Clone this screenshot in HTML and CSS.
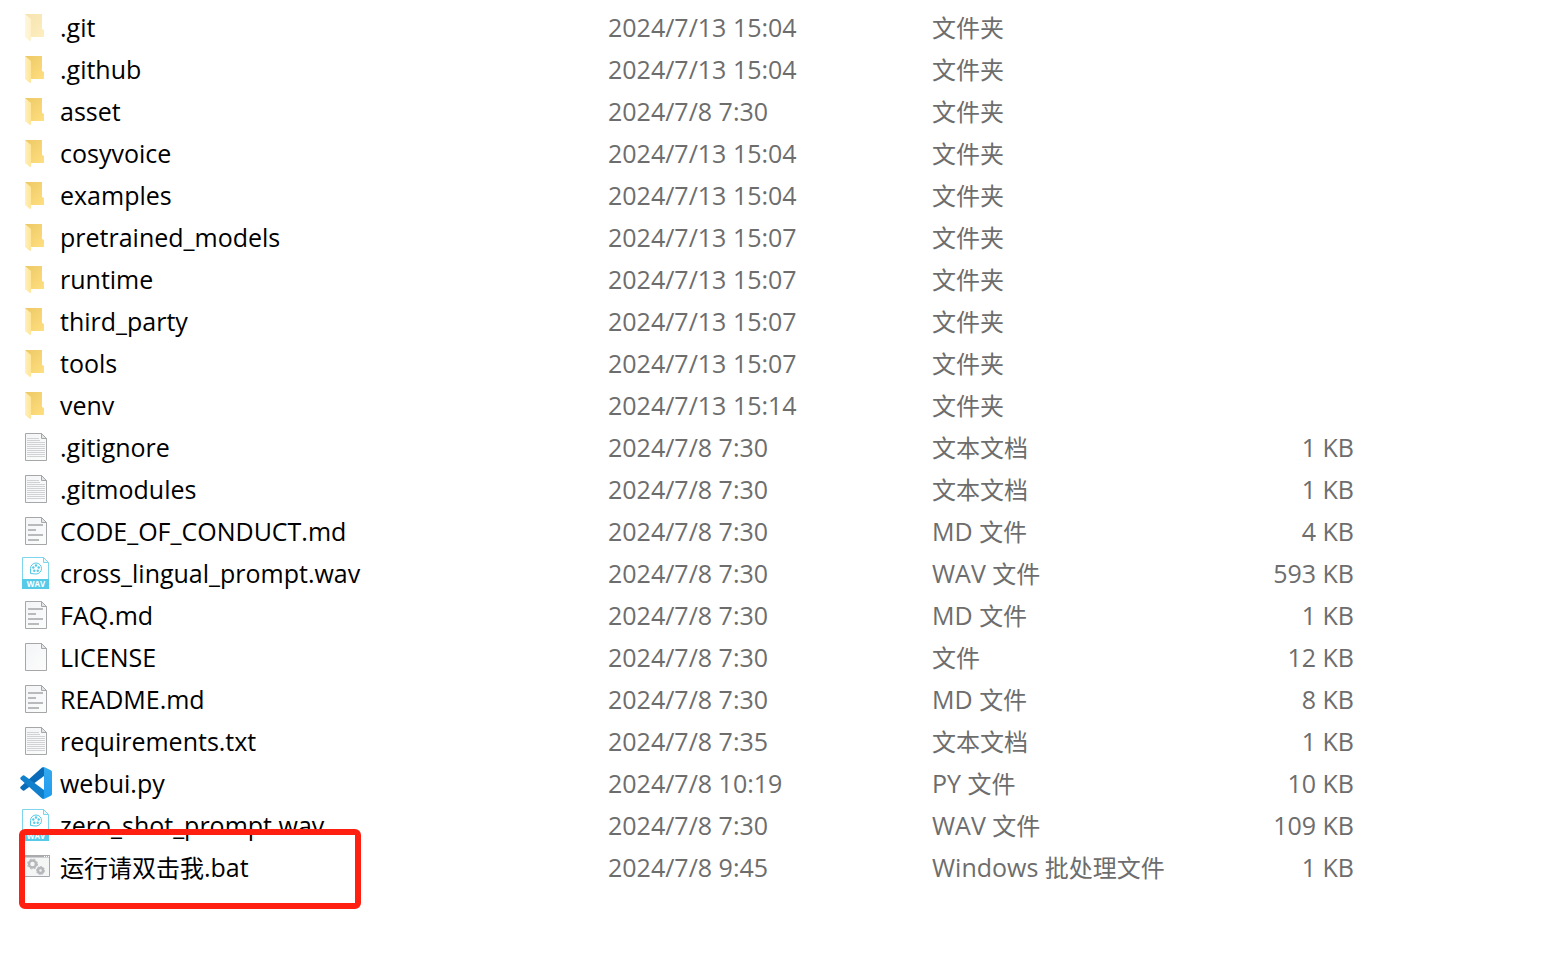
FILE: index.html
```
<!DOCTYPE html>
<html lang="zh-CN">
<head>
  <meta charset="UTF-8">
  <title>CosyVoice</title>
  <link rel="stylesheet" href="styles.css">
</head>
<body>

<svg class="icon-defs" aria-hidden="true">
  <defs>
    <linearGradient id="folderBack" x1="0" y1="0" x2="1" y2="1">
      <stop offset="0" stop-color="#edc865"/>
      <stop offset="1" stop-color="#ffdf80"/>
    </linearGradient>
    <linearGradient id="folderFlap" x1="0" y1="0" x2="1" y2="0">
      <stop offset="0" stop-color="#fff0bb"/>
      <stop offset="1" stop-color="#ffe596"/>
    </linearGradient>
    <linearGradient id="codeRight" x1="0" y1="0" x2="0" y2="1">
      <stop offset="0" stop-color="#34a9ee"/>
      <stop offset="1" stop-color="#1f9cf0"/>
    </linearGradient>
    <linearGradient id="paper" x1="0" y1="0" x2="1" y2="1">
      <stop offset="0" stop-color="#f3f5f6"/>
      <stop offset="1" stop-color="#fcfcfc"/>
    </linearGradient>
  </defs>
</svg>

<table class="files">
  <colgroup>
    <col class="col-name">
    <col class="col-date">
    <col class="col-type">
    <col class="col-size">
    <col>
  </colgroup>
  <tbody id="fileRows"></tbody>
</table>

<script src="files.js"></script>
</body>
</html>
```
FILE: styles.css
```
body {
  box-sizing: border-box;
  min-height: 100vh;
  margin: 0;
  padding: 6px 0 24px 20px;
  background: #fff;
  color: #000;
  font-family: "Open Sans", "Noto Sans CJK SC", sans-serif;
  font-size: 25px;
  line-height: 42px;
}
.icon-defs {
  position: absolute;
  width: 0;
  height: 0;
}
.icon-label {
  fill: #fff;
  font-size: 8px;
  font-weight: bold;
}
.files {
  width: 100%;
  table-layout: fixed;
  border-collapse: collapse;
}
.col-name {
  width: 588px;
}
.col-date {
  width: 324px;
}
.col-type {
  width: 300px;
}
.col-size {
  width: 122px;
}
td {
  height: 42px;
  padding: 0;
  color: #6d6d6d;
  white-space: nowrap;
}
.name {
  display: flex;
  position: relative;
  align-items: center;
  gap: 8px;
  height: 42px;
  color: #000;
}
.icon {
  width: 32px;
  height: 32px;
}
.hidden .icon {
  opacity: 0.5;
}
.zh {
  font-family: "Noto Sans CJK SC", sans-serif;
  font-size: 24px;
  line-height: 24px;
}
.size {
  text-align: right;
}
.marked::after {
  content: "";
  position: absolute;
  top: -17px;
  left: -1px;
  width: 330px;
  height: 68px;
  border: 6px solid #ff2012;
  border-radius: 6px;
}
```
FILE: files.js
```
const paper = `
  <path fill="url(#paper)" stroke="#a5a7a9" d="M5.500 2.500h16l5 5v22h-21z"/>
  <path fill="#e4e5e6" stroke="#a5a7a9" d="M21.500 2.500v5h5z"/>`;

const icons = {
  folder: `
    <path fill="url(#folderBack)" d="M5 3h17v15l2 1v7H9z"/>
    <path fill="url(#folderFlap)" d="M5 3l6 5v21.500l-1 .5-5-4z"/>`,
  file: paper,
  text: paper + `
    <path stroke="#d0d2d3" d="M7 7.500h12M7 9.500h13M7 11.500h18M7 13.500h18M7 15.500h18M7 17.500h18M7 19.500h18M7 21.500h18M7 23.500h18M7 25.500h18"/>`,
  markdown: paper + `
    <path stroke="#b8babc" stroke-width="2" d="M8 10h10M8 15h8M8 20h15M8 25h11M18 10h5"/>`,
  wav: `
    <path fill="#fff" stroke="#7fd6ec" d="M2.500 .5h21l5 5v26h-26z"/>
    <path fill="#e8f8fc" stroke="#7fd6ec" d="M23.500 .5v5h5z"/>
    <path fill="#56cbe8" d="M2 22h27v10H2z"/>
    <path fill="none" stroke="#56cbe8" d="M10.500 16.500v-5a5.500 5.500 0 1 1 5.500 5.500z"/>
    <g fill="#56cbe8">
      <circle cx="16" cy="8.500" r="1.200"/>
      <circle cx="13.300" cy="10.500" r="1.200"/>
      <circle cx="18.700" cy="10.500" r="1.200"/>
      <circle cx="14.300" cy="13.700" r="1.200"/>
      <circle cx="17.700" cy="13.700" r="1.200"/>
    </g>
    <text class="icon-label" x="16" y="30" text-anchor="middle">WAV</text>`,
  vscode: `
    <path fill="#0a6cb8" d="M22 .6L.8 19.600a1.500 1.500 0 0 0 0 2.200l1.700 1.500a1.500 1.500 0 0 0 1.800.1L24 9V0z"/>
    <path fill="#1080cc" d="M22 31.400L.8 12.400a1.500 1.500 0 0 1 0-2.200l1.700-1.500a1.500 1.500 0 0 1 1.800-.1L24 23v9z"/>
    <path fill="url(#codeRight)" d="M24 0l6.900 3.300a2 2 0 0 1 1.100 1.800v21.800a2 2 0 0 1-1.100 1.800L24 32q-1.200.3-2-.6 2 .4 2-1.400V2q0-1.800-2-1.400.8-.9 2-.6z"/>`,
  batch: `
    <path fill="#f4f5f5" stroke="#a5a8ac" d="M3.500 4.500h26v21h-26z"/>
    <path fill="#a9abaf" d="M3 4h27v2.500H3z"/>
    <path stroke="#fff" d="M24 5.500h1M26 5.500h1M28 5.500h1"/>
    <g fill="none" stroke="#b5b7ba">
      <circle cx="12.500" cy="13" r="3.500" stroke-width="2.500"/>
      <circle cx="12.500" cy="13" r="5" stroke-dasharray="2 2"/>
      <circle cx="20.500" cy="19.500" r="2.500" stroke-width="2.500"/>
      <circle cx="20.500" cy="19.500" r="4" stroke-dasharray="2 1"/>
    </g>`
};

const files = [
  ['folder', '.git', '2024/7/13 15:04', '文件夹', '', 'hidden'],
  ['folder', '.github', '2024/7/13 15:04', '文件夹', ''],
  ['folder', 'asset', '2024/7/8 7:30', '文件夹', ''],
  ['folder', 'cosyvoice', '2024/7/13 15:04', '文件夹', ''],
  ['folder', 'examples', '2024/7/13 15:04', '文件夹', ''],
  ['folder', 'pretrained_models', '2024/7/13 15:07', '文件夹', ''],
  ['folder', 'runtime', '2024/7/13 15:07', '文件夹', ''],
  ['folder', 'third_party', '2024/7/13 15:07', '文件夹', ''],
  ['folder', 'tools', '2024/7/13 15:07', '文件夹', ''],
  ['folder', 'venv', '2024/7/13 15:14', '文件夹', ''],
  ['text', '.gitignore', '2024/7/8 7:30', '文本文档', '1 KB'],
  ['text', '.gitmodules', '2024/7/8 7:30', '文本文档', '1 KB'],
  ['markdown', 'CODE_OF_CONDUCT.md', '2024/7/8 7:30', 'MD 文件', '4 KB'],
  ['wav', 'cross_lingual_prompt.wav', '2024/7/8 7:30', 'WAV 文件', '593 KB'],
  ['markdown', 'FAQ.md', '2024/7/8 7:30', 'MD 文件', '1 KB'],
  ['file', 'LICENSE', '2024/7/8 7:30', '文件', '12 KB'],
  ['markdown', 'README.md', '2024/7/8 7:30', 'MD 文件', '8 KB'],
  ['text', 'requirements.txt', '2024/7/8 7:35', '文本文档', '1 KB'],
  ['vscode', 'webui.py', '2024/7/8 10:19', 'PY 文件', '10 KB'],
  ['wav', 'zero_shot_prompt.wav', '2024/7/8 7:30', 'WAV 文件', '109 KB'],
  ['batch', '运行请双击我.bat', '2024/7/8 9:45', 'Windows 批处理文件', '1 KB', 'marked']
];

// Chinese runs get their own font size
function label(text) {
  return text.replace(/[\u4e00-\u9fff]+/g, '<span class="zh">$&</span>');
}

document.getElementById('fileRows').innerHTML = files.map(([icon, name, date, type, size, state = '']) => `
  <tr>
    <td><div class="name ${state}"><svg class="icon" viewBox="0 0 32 32" aria-hidden="true">${icons[icon]}</svg><span>${label(name)}</span></div></td>
    <td>${date}</td>
    <td>${label(type)}</td>
    <td class="size">${size}</td>
    <td></td>
  </tr>`).join('');
```
